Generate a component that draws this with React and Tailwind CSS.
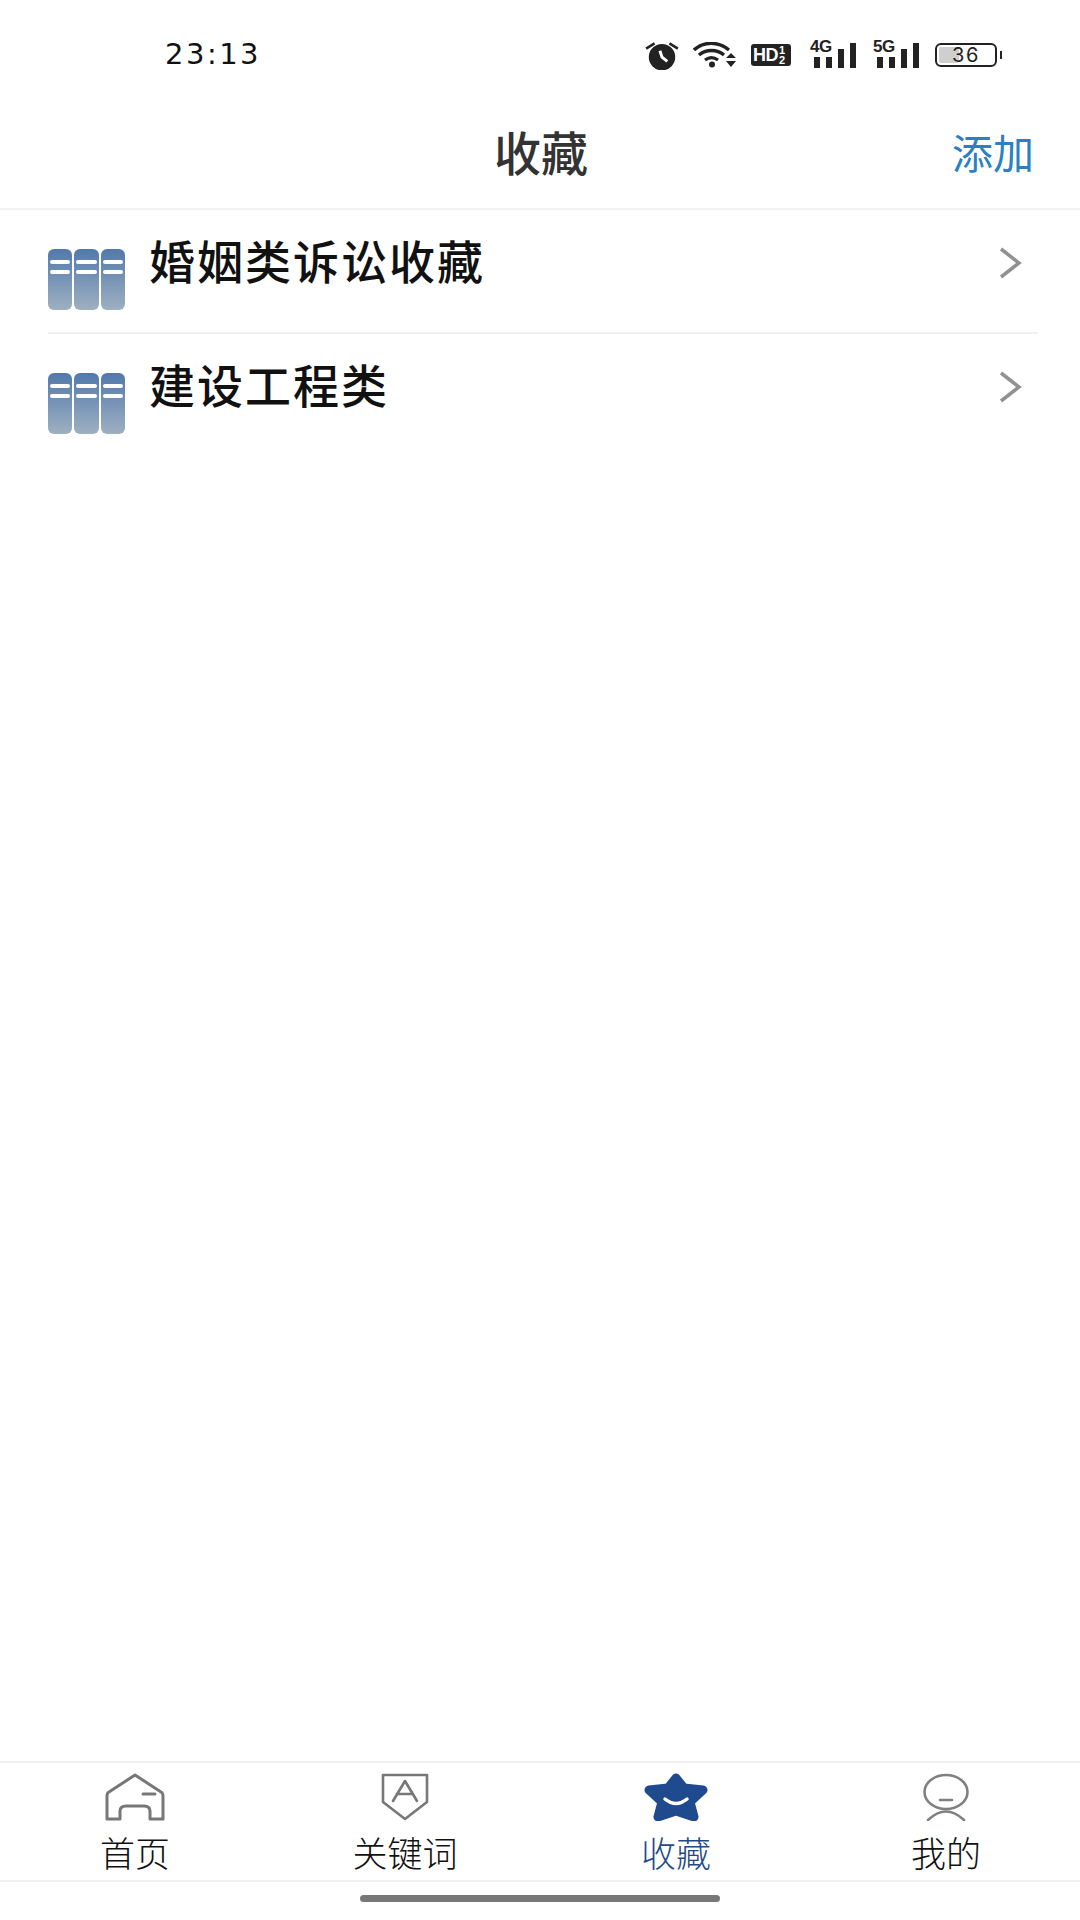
import React from 'react';

const font = { fontFamily: '"Noto Sans CJK SC", "Noto Sans", sans-serif' };

const AlarmIcon = () => (
    <svg width="36" height="30" viewBox="0 0 34 28">
        <circle cx="17" cy="16" r="12.5" fill="#222" />
        <path d="M15 10l2 6 5 4" stroke="#fff" strokeWidth="2.8" fill="none" />
        <path d="M2 8l8-5M32 8l-8-5" stroke="#222" strokeWidth="2.4" />
    </svg>
);

const WifiIcon = () => (
    <svg width="44" height="26" viewBox="0 0 44 26">
        <path d="M1 8C11-1 25-1 36 8" stroke="#222" strokeWidth="3.4" fill="none" />
        <path d="M6 13c7-6 18-6 25 0" stroke="#222" strokeWidth="3.4" fill="none" />
        <path d="M12 18c4-3 9-3 13 0" stroke="#222" strokeWidth="3.2" fill="none" />
        <circle cx="19" cy="22.5" r="3" fill="#222" />
        <path d="M33 16h10l-5-5zM33 19h10l-5 6z" fill="#222" />
    </svg>
);

const HdIcon = () => (
    <div className="relative flex h-[22px] w-[40px] items-center rounded-[3px] bg-[#222] pl-[2px] text-white" style={{ fontFamily: '"Liberation Sans", sans-serif' }}>
        <span className="text-[18px] leading-none font-bold tracking-[-0.5px]">HD</span>
        <span className="ml-[1px] flex flex-col items-center text-[11px] leading-[10px] font-bold">
            <span>1</span>
            <span>2</span>
        </span>
    </div>
);

const SignalIcon = ({ label }) => (
    <div className="relative h-[26px] w-[46px]">
        <span className="absolute top-[-3px] left-0 text-[17px] leading-[16px] font-bold tracking-[-0.5px] text-[#222]" style={{ fontFamily: '"Liberation Sans", sans-serif' }}>{label}</span>
        <svg width="46" height="26" viewBox="0 0 46 26" className="absolute top-0 left-0">
            <rect x="4" y="15" width="6" height="11" fill="#222" />
            <rect x="16" y="15" width="6" height="11" fill="#222" />
            <rect x="28" y="7" width="6" height="19" fill="#222" />
            <rect x="40" y="1" width="6" height="25" fill="#222" />
        </svg>
    </div>
);

const BatteryIcon = () => (
    <div className="flex items-center gap-[3px]">
        <div className="relative flex h-[24px] w-[62px] items-center justify-center overflow-hidden rounded-[6px] border-2 border-[#222]">
            <div className="absolute top-[2px] bottom-[2px] left-[2px] w-[20px] rounded-[2px] bg-[#cfcfcf]" />
            <span className="relative text-[20px] leading-none tracking-[1.5px] text-[#222]" style={{ fontFamily: 'Inter, sans-serif' }}>36</span>
        </div>
        <div className="h-[8px] w-[2px] bg-[#222]" />
    </div>
);

const FolderIcon = () => (
    <div className="flex h-[61px] w-[77px] shrink-0 gap-[2px]">
        {[0, 1, 2].map((i) => (
            <div key={i} className="flex flex-1 flex-col gap-[6px] rounded-[6px] bg-linear-to-b from-[#5279ab] to-[#9eb0c0] px-[2px] pt-[11px]">
                <div className="h-[4px] rounded-full bg-white" />
                <div className="h-[4px] rounded-full bg-white" />
            </div>
        ))}
    </div>
);

const HomeIcon = () => (
    <svg width="60" height="48" viewBox="0 0 60 48" fill="none" stroke="#777" strokeWidth="3" strokeLinejoin="round" strokeLinecap="round">
        <path d="M30 2L4 19Q2 20 2 23V46H15V38Q15 33 21 33H39Q45 33 45 38V46H58V23Q58 20 56 19Z" />
        <path d="M38 21H50" />
    </svg>
);

const KeywordIcon = () => (
    <svg width="48" height="48" viewBox="0 0 48 48" fill="none" stroke="#777" strokeWidth="2.6" strokeLinejoin="round" strokeLinecap="round">
        <path d="M2 2H46V29L24 46L2 29Z" />
        <path d="M12 28L24 8L36 28M16 21H32" />
    </svg>
);

const StarIcon = () => (
    <svg width="64" height="48" viewBox="0 0 64 48">
        <path d="M32 5L40 15L59 17L46 29L50 44L32 38L14 44L18 29L5 17L24 15Z" fill="#1f4a8e" stroke="#1f4a8e" strokeWidth="9" strokeLinejoin="round" />
        <path d="M21 26Q32 35 43 26" fill="none" stroke="#fff" strokeWidth="3.5" strokeLinecap="round" />
    </svg>
);

const MineIcon = () => (
    <svg width="46" height="48" viewBox="0 0 46 48" fill="none" stroke="#808080" strokeWidth="2.6" strokeLinecap="round">
        <ellipse cx="23" cy="19" rx="21.5" ry="17" />
        <path d="M17 27H29" />
        <path d="M5 47Q23 30 41 47" />
    </svg>
);

const items = [
    { id: 1, title: '婚姻类诉讼收藏', divider: true },
    { id: 2, title: '建设工程类', divider: false },
];

const tabs = [
    { label: '首页', icon: <HomeIcon /> },
    { label: '关键词', icon: <KeywordIcon /> },
    { label: '收藏', icon: <StarIcon />, active: true },
    { label: '我的', icon: <MineIcon /> },
];

export default function App() {
    return (
        <div className="flex h-[1920px] w-[1080px] flex-col bg-white" style={font}>
            {/* Status bar */}
            <div className="flex h-[108px] shrink-0 items-start justify-between pt-[40px] pr-[78px] pl-[165px]">
                <span className="text-[29px] leading-[28px] tracking-[2.5px] text-[#111]" style={{ fontFamily: '"DejaVu Sans", sans-serif' }}>23:13</span>
                <div className="flex items-center">
                    <AlarmIcon />
                    <div className="ml-[13px]"><WifiIcon /></div>
                    <div className="ml-[14px]"><HdIcon /></div>
                    <div className="ml-[19px]"><SignalIcon label="4G" /></div>
                    <div className="ml-[17px]"><SignalIcon label="5G" /></div>
                    <div className="ml-[16px]"><BatteryIcon /></div>
                </div>
            </div>

            {/* Header */}
            <header className="relative flex h-[102px] shrink-0 items-start justify-center border-b-2 border-[#f2f2f2]">
                <h1 className="pl-[2px] text-[47px] leading-[86px] font-medium text-[#333]">收藏</h1>
                <span className="absolute top-0 right-[46px] text-[41px] leading-[86px] text-[#2a80c4]">添加</span>
            </header>

            {/* List */}
            <main className="flex-1 pl-[48px]">
                {items.map((item) => (
                    <div key={item.id} className={`mr-[42px] flex h-[124px] items-start border-[#f0f0f0] ${item.divider ? 'border-b-2' : ''}`}>
                        <div className="mt-[39px]"><FolderIcon /></div>
                        <span className="mt-[23px] ml-[24px] flex-1 text-[46px] leading-[52px] font-medium tracking-[2px] text-[#111]">{item.title}</span>
                        <svg width="24" height="32" viewBox="0 0 24 32" fill="none" stroke="#919191" strokeWidth="3.5" className="mt-[37px] mr-[16px]">
                            <path d="M3 2L21 16L3 30" />
                        </svg>
                    </div>
                ))}
            </main>

            {/* Bottom tabs */}
            <nav className="grid h-[121px] shrink-0 grid-cols-[270px_270px_272px_268px] border-y-2 border-[#f0f0f0] pt-[10px]">
                {tabs.map((tab) => (
                    <div key={tab.label} className="flex flex-col items-center">
                        {tab.icon}
                        <span className={`mt-[8px] text-[35px] leading-[46px] font-light ${tab.active ? 'text-[#1f4a86]' : 'text-[#111]'}`}>{tab.label}</span>
                    </div>
                ))}
            </nav>

            {/* Home indicator */}
            <div className="flex h-[38px] shrink-0 justify-center pt-[13px]">
                <div className="h-[7px] w-[360px] rounded-full bg-[#777]" />
            </div>
        </div>
    );
}
